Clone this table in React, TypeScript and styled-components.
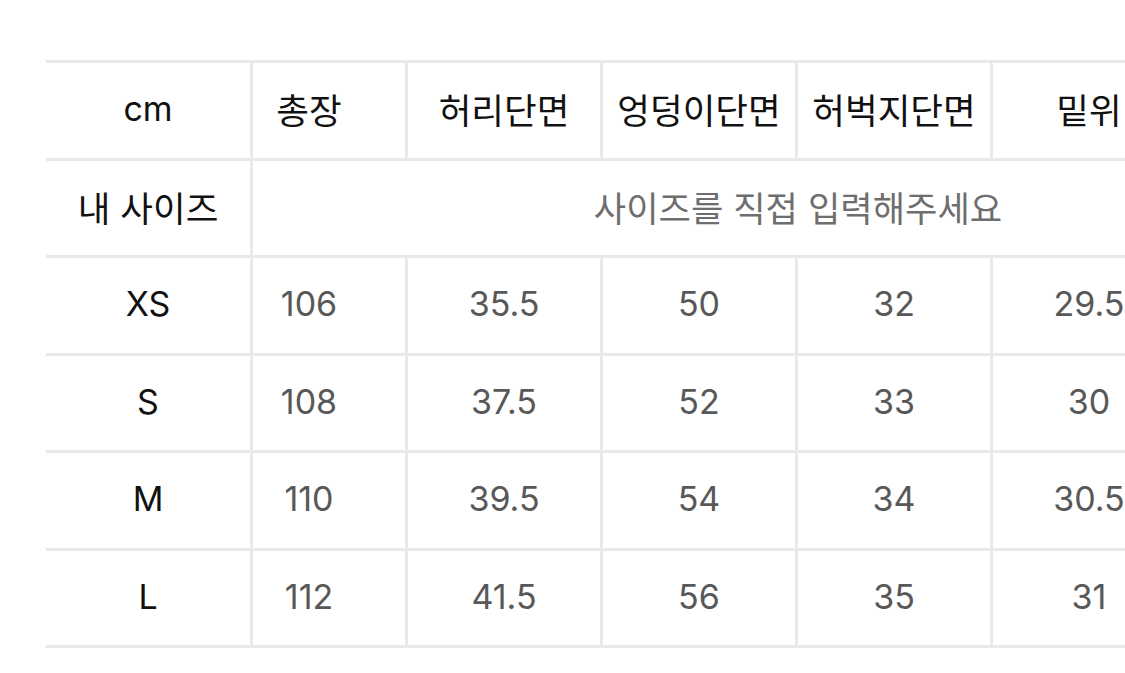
import * as React from 'react';
import styled, { createGlobalStyle } from 'styled-components';

const GlobalStyle = createGlobalStyle`
	html, body {
		margin: 0;
		padding: 0;
		background: #fff;
	}
	body {
		font-family: Inter, "Noto Sans CJK KR", sans-serif;
		overflow: hidden;
	}
`;

const LINE = '#e9e9e9';

const columns = ['총장', '허리단면', '엉덩이단면', '허벅지단면', '밑위', '밑단단면'];

const sizes = [
	{ name: 'XS', values: ['106', '35.5', '50', '32', '29.5', '22'] },
	{ name: 'S', values: ['108', '37.5', '52', '33', '30', '23'] },
	{ name: 'M', values: ['110', '39.5', '54', '34', '30.5', '24'] },
	{ name: 'L', values: ['112', '41.5', '56', '35', '31', '25'] },
];

const Page = styled.div`
	padding: 60px 0 0 46px;
`;

const Scroller = styled.div`
	display: flex;
	overflow: hidden;
	border-top: 3px solid ${LINE};
`;

const FixedColumn = styled.div`
	flex: none;
	width: 207px;
	position: sticky;
	left: 0;
	z-index: 1;
	background: #fff;
	border-right: 3px solid ${LINE};
	box-sizing: border-box;
`;

const DataTable = styled.div`
	flex: none;
	margin-left: -40px;
`;

const Row = styled.div`
	display: flex;
	height: 97.5px;
	box-sizing: border-box;
	border-bottom: 3px solid ${LINE};
`;

/* Hangul is drawn a bit larger than the latin digits, as on the phone. */
const Cell = styled.div<{ $muted?: boolean; $wide?: boolean; $ko?: boolean }>`
	flex: none;
	width: ${p => (p.$wide ? `${195 * columns.length}px` : '195px')};
	display: flex;
	align-items: center;
	justify-content: center;
	box-sizing: border-box;
	padding-bottom: 3px;
	border-right: ${p => (p.$wide ? 'none' : `3px solid ${LINE}`)};
	font-size: ${p => (p.$ko ? '35.5px' : '34px')};
	color: ${p => (p.$muted ? '#585858' : '#111')};
	white-space: nowrap;
`;

const LabelCell = styled.div<{ $ko?: boolean }>`
	height: 100%;
	width: 100%;
	display: flex;
	align-items: center;
	justify-content: center;
	box-sizing: border-box;
	padding-bottom: 3px;
	font-size: ${p => (p.$ko ? '35.5px' : '34px')};
	color: #111;
`;

const Placeholder = styled.span`
	color: #6e6e6e;
	font-size: 35.2px;
`;

export default function App() {
	return (
		<Page>
			<GlobalStyle />
			<Scroller>
				<FixedColumn>
					<Row><LabelCell>cm</LabelCell></Row>
					<Row><LabelCell $ko>내 사이즈</LabelCell></Row>
					{sizes.map(s => (
						<Row key={s.name}><LabelCell>{s.name}</LabelCell></Row>
					))}
				</FixedColumn>
				<DataTable>
					<Row>
						{columns.map(c => (
							<Cell key={c} $ko>{c}</Cell>
						))}
					</Row>
					<Row>
						<Cell $wide $ko><Placeholder>사이즈를 직접 입력해주세요</Placeholder></Cell>
					</Row>
					{sizes.map(s => (
						<Row key={s.name}>
							{s.values.map((v, i) => (
								<Cell key={i} $muted>{v}</Cell>
							))}
						</Row>
					))}
				</DataTable>
			</Scroller>
		</Page>
	);
}
